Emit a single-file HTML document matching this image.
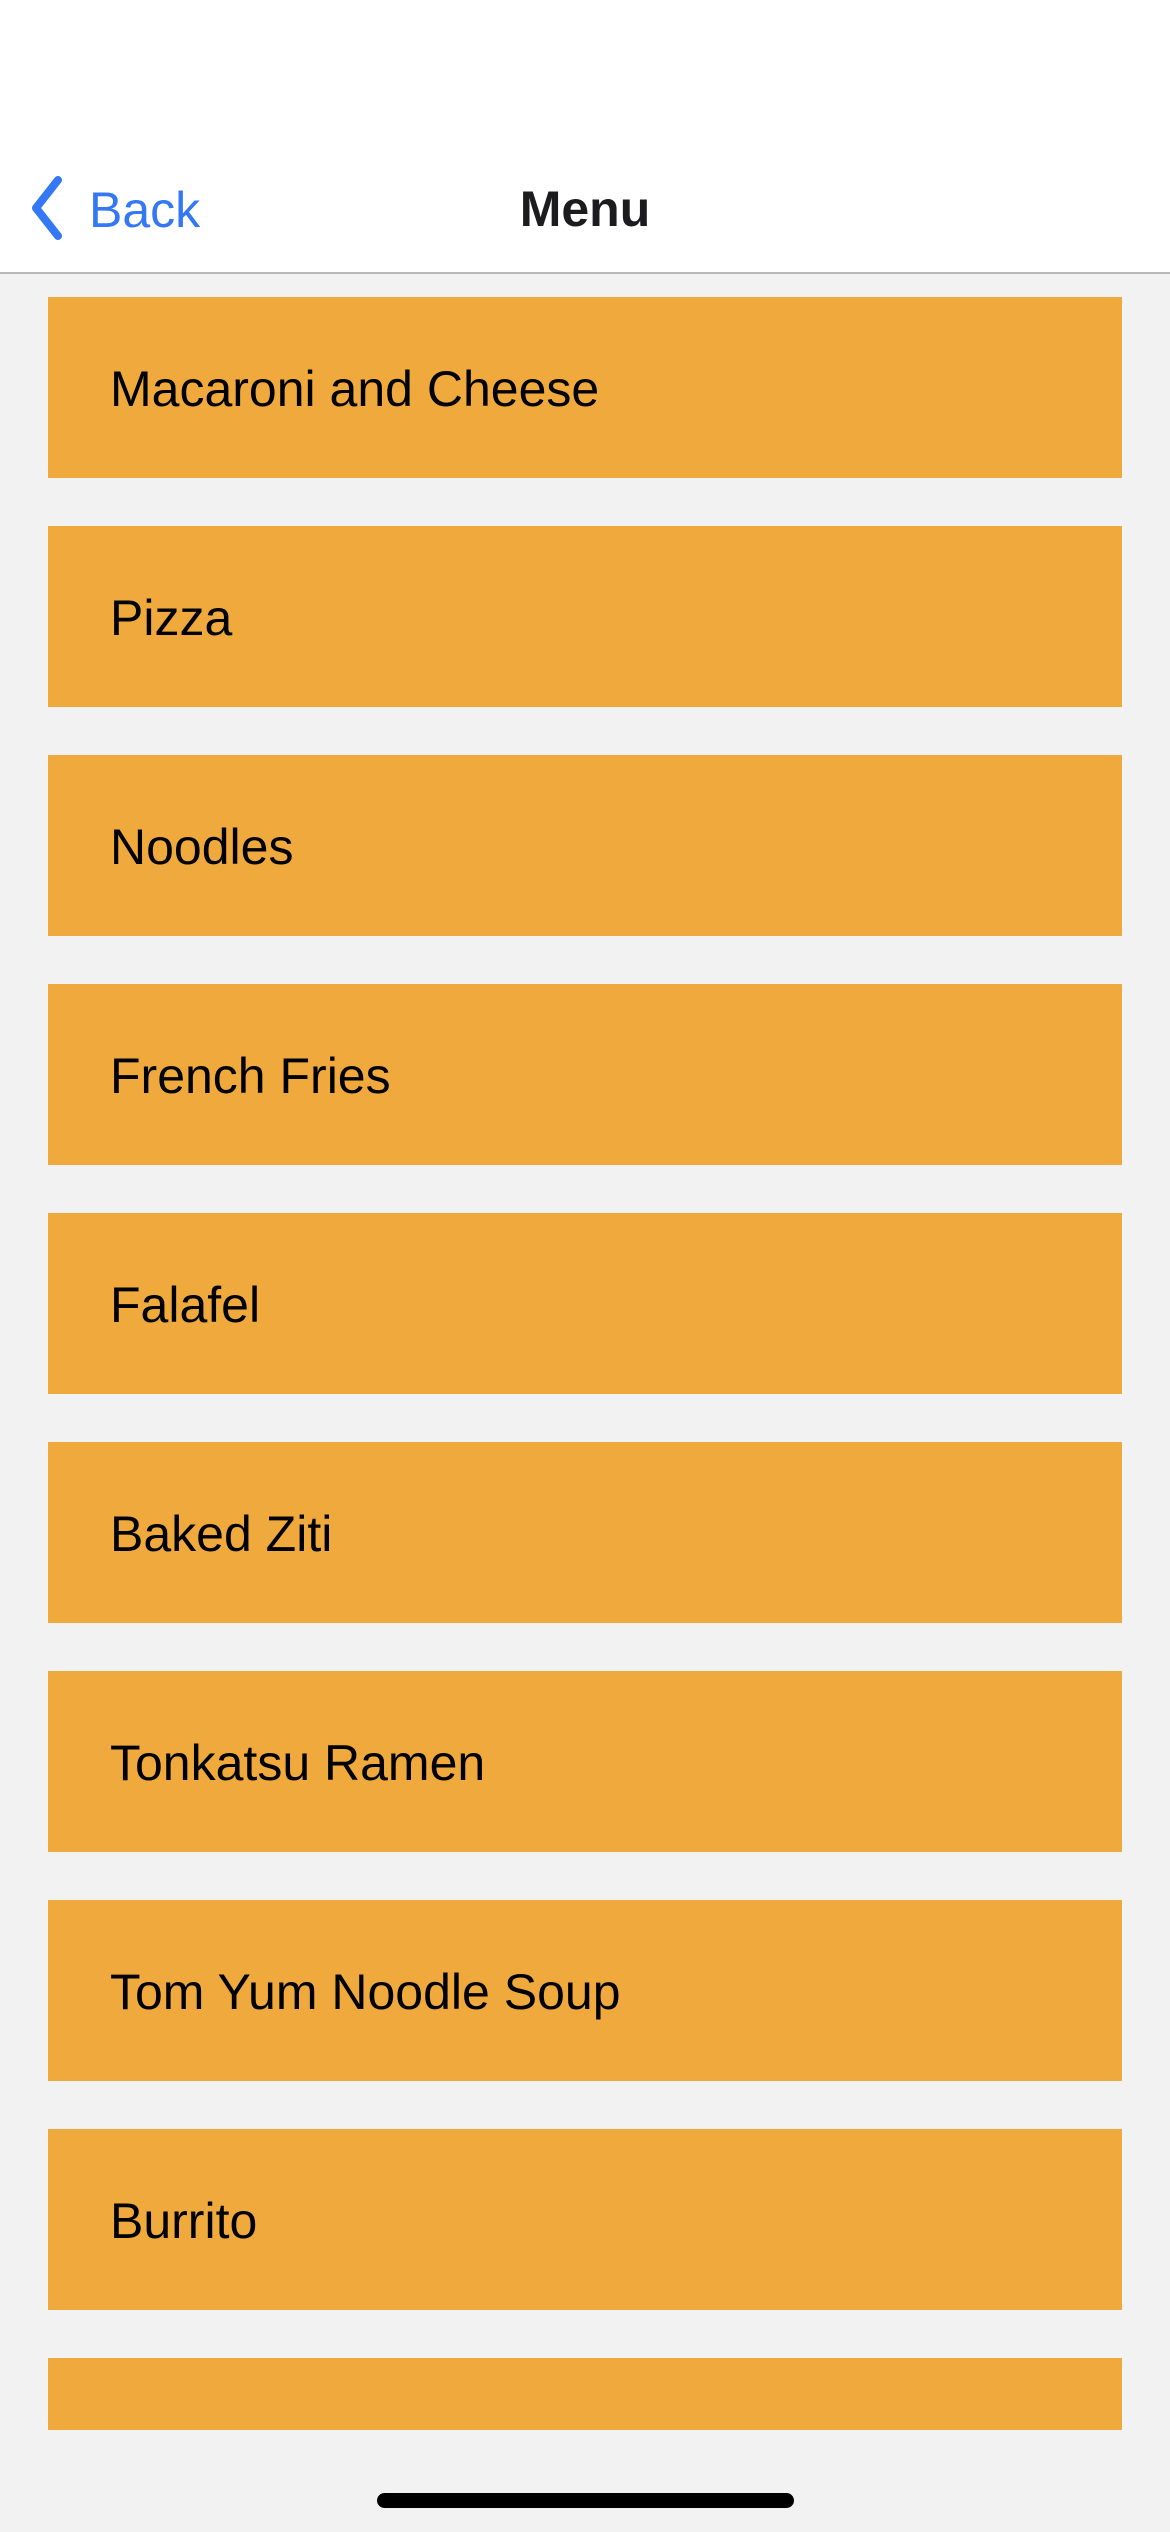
<!DOCTYPE html>
<html><head><meta charset="utf-8"><style>
body{margin:0;width:1170px;height:2532px;background:#f2f2f2;position:relative;overflow:hidden;font-family:"Liberation Sans",sans-serif}
.hdr{position:absolute;left:0;top:0;width:1170px;height:272px;background:#fff;border-bottom:2px solid #b8b8b8}
.back{position:absolute;left:89px;top:180px;font-size:50px;color:#3478f6;line-height:60px}
.title{position:absolute;left:0;width:1170px;text-align:center;top:179px;font-size:50px;font-weight:bold;color:#1c1c1e;line-height:60px}
.item{position:absolute;left:48px;width:1074px;height:181px;background:#f0a93c}
.item span{position:absolute;left:62px;top:62px;font-size:50px;line-height:60px;color:#000}
.bar{position:absolute;left:377px;top:2493px;width:417px;height:15px;border-radius:8px;background:#000}
</style></head><body>
<div class="hdr">
<svg style="position:absolute;left:20px;top:172px" width="50" height="70"><path d="M38 8 L16 36 L38 64" fill="none" stroke="#3478f6" stroke-width="8" stroke-linecap="round" stroke-linejoin="round"/></svg>
<div class="back">Back</div>
<div class="title">Menu</div>
</div>
<div class="item" style="top:297px"><span>Macaroni and Cheese</span></div>
<div class="item" style="top:526px"><span>Pizza</span></div>
<div class="item" style="top:755px"><span>Noodles</span></div>
<div class="item" style="top:984px"><span>French Fries</span></div>
<div class="item" style="top:1213px"><span>Falafel</span></div>
<div class="item" style="top:1442px"><span>Baked Ziti</span></div>
<div class="item" style="top:1671px"><span>Tonkatsu Ramen</span></div>
<div class="item" style="top:1900px"><span>Tom Yum Noodle Soup</span></div>
<div class="item" style="top:2129px"><span>Burrito</span></div>
<div class="item" style="top:2358px;height:72px"></div>
<div class="bar"></div>
</body></html>
